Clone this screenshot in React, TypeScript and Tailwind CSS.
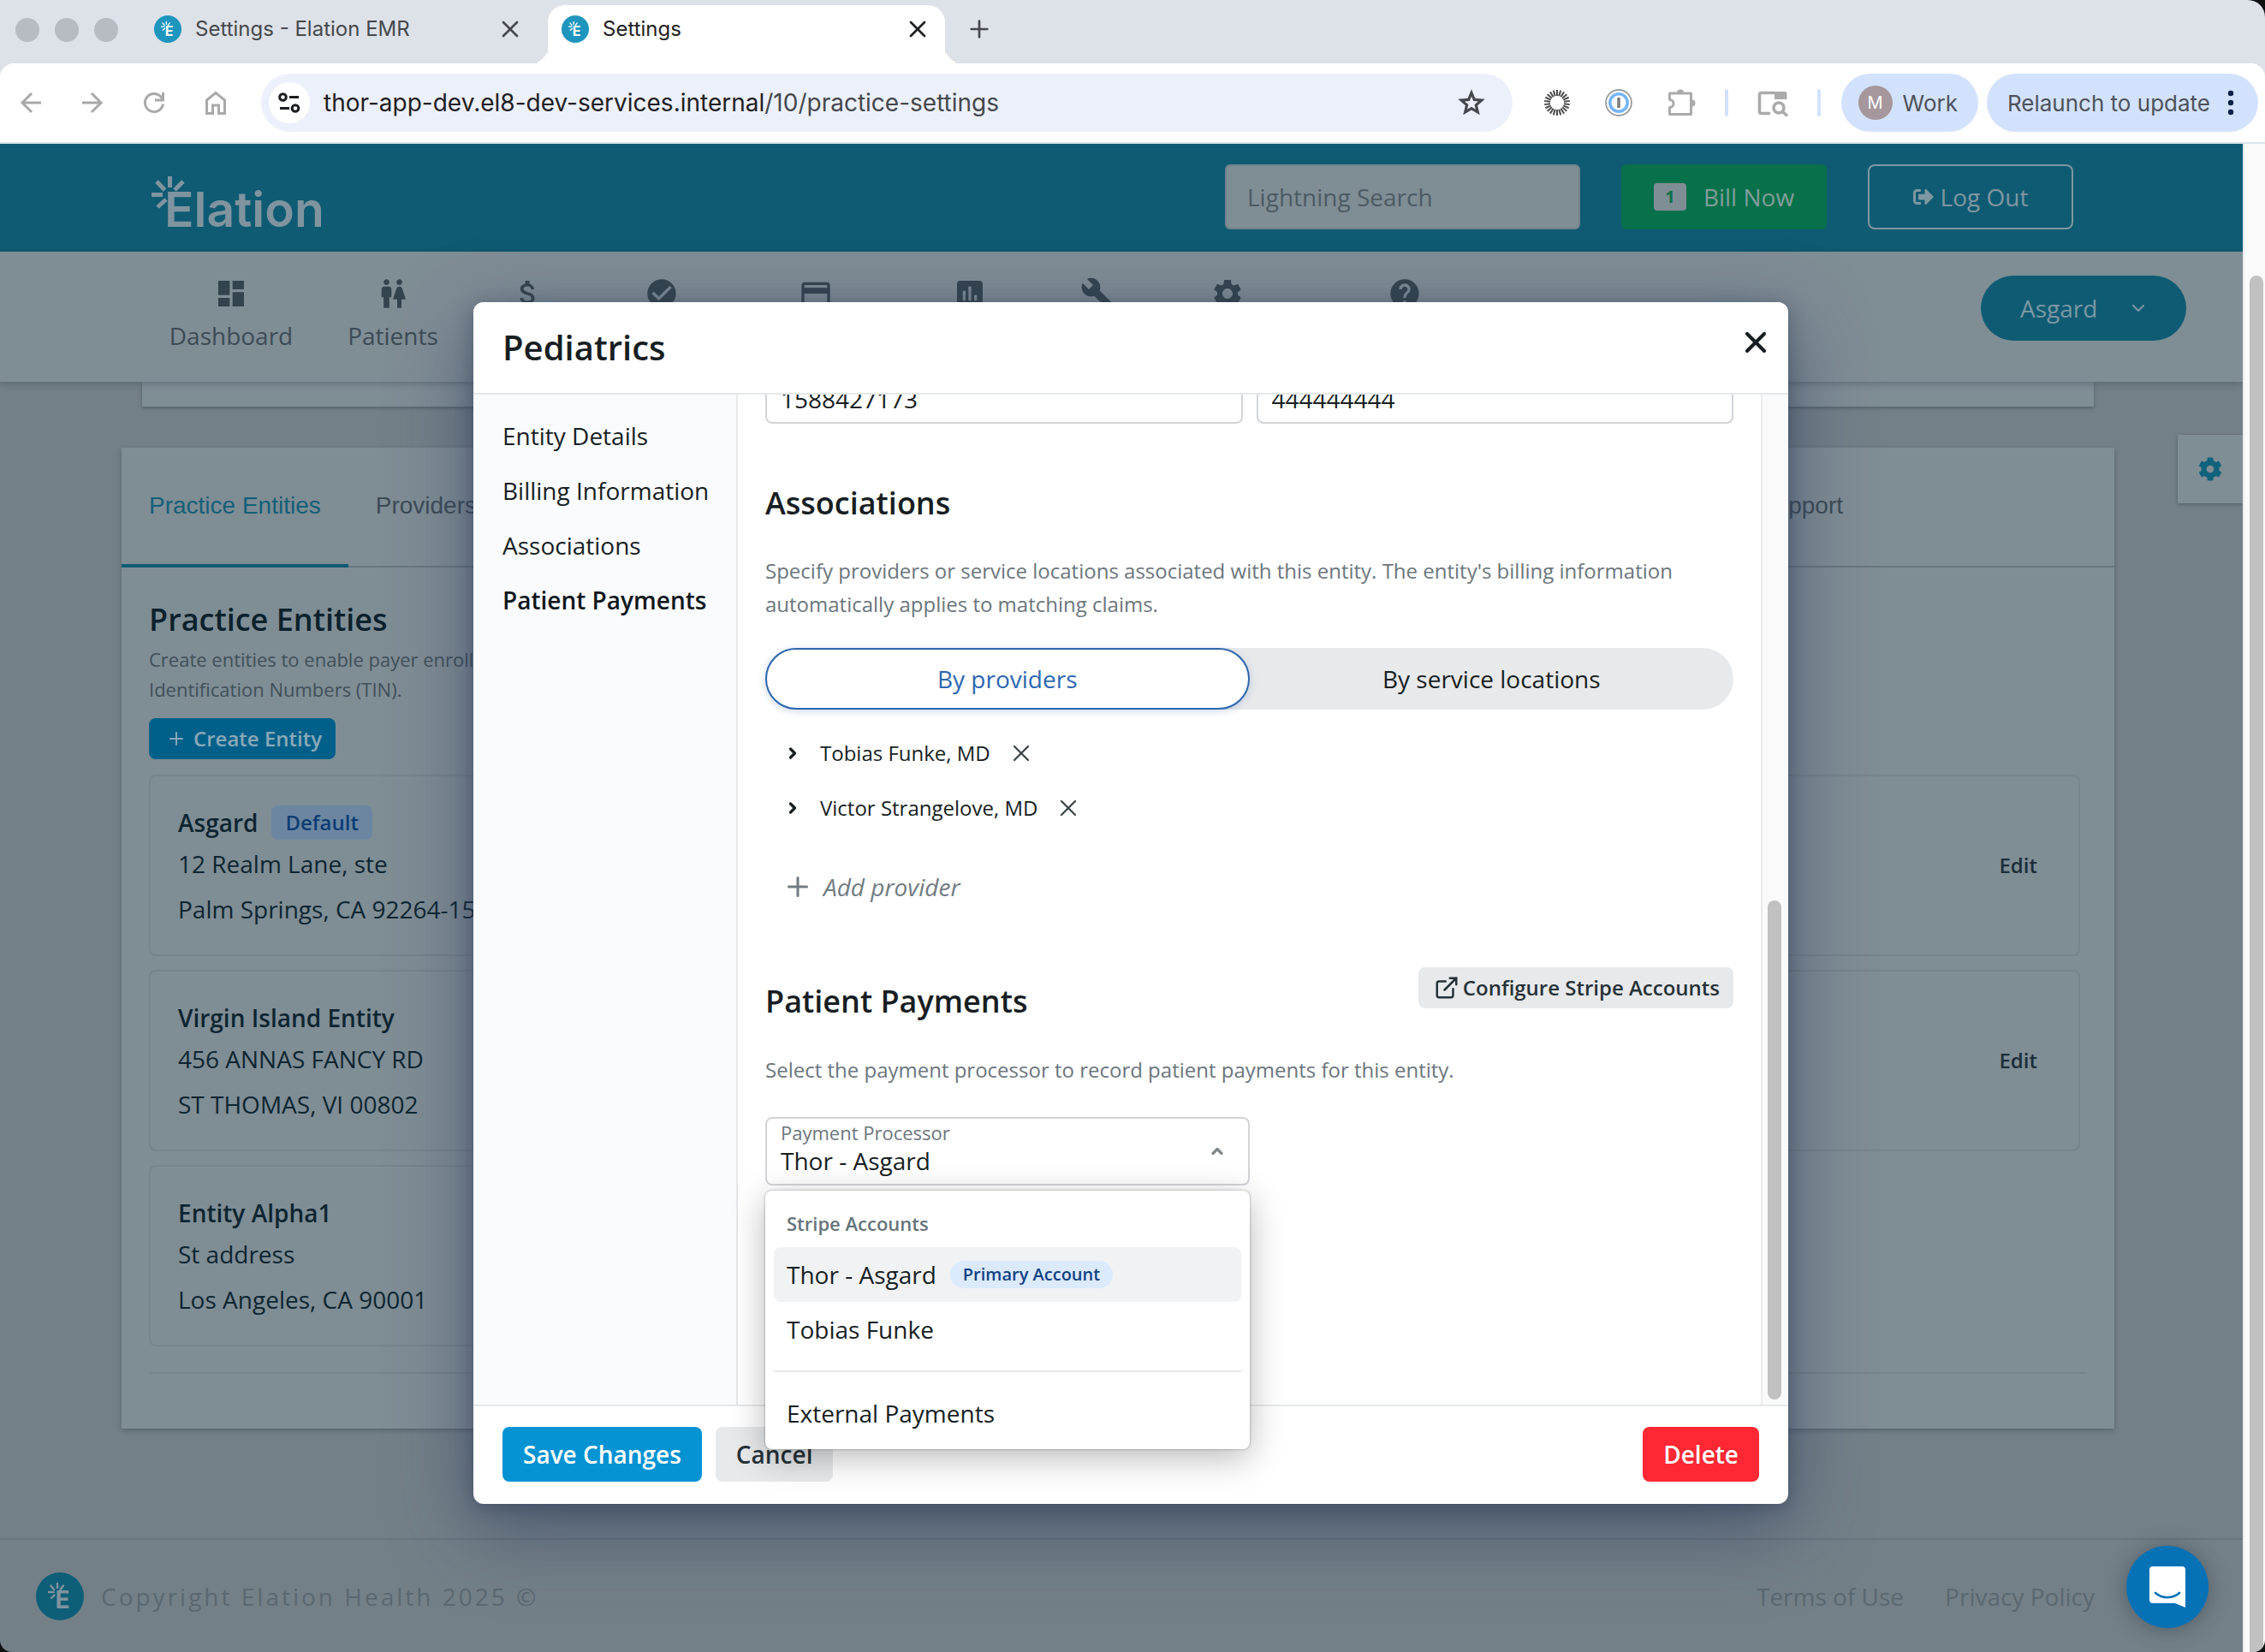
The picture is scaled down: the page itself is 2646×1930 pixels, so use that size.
import { ChevronDown, ChevronRight, ChevronUp, ExternalLink, Plus, X } from "lucide-react";
import { FaCog, FaSignOutAlt } from "react-icons/fa";
import {
  MdAssessment,
  MdAttachMoney,
  MdBuild,
  MdCheckCircle,
  MdCreditCard,
  MdDashboard,
  MdHelp,
  MdSettings,
  MdWc,
} from "react-icons/md";

const navItems = [
  { id: "dashboard", label: "Dashboard", icon: MdDashboard, width: "w-36" },
  { id: "patients", label: "Patients", icon: MdWc, width: "w-[110px]" },
  { id: "billing", icon: MdAttachMoney, width: "w-[82px]" },
  { id: "tasks", icon: MdCheckCircle, width: "w-[106px]" },
  { id: "payments", icon: MdCreditCard, width: "w-[130px]" },
  { id: "reports", icon: MdAssessment, width: "w-[106px]" },
  { id: "tools", icon: MdBuild, width: "w-[68px]" },
  { id: "settings", icon: MdSettings, width: "w-[112px]" },
  { id: "help", icon: MdHelp, width: "w-[178px]" },
];

const entities = [
  { name: "Asgard", street: "12 Realm Lane, ste", city: "Palm Springs, CA 92264-15", isDefault: true, canEdit: true },
  { name: "Virgin Island Entity", street: "456 ANNAS FANCY RD", city: "ST THOMAS, VI 00802", canEdit: true },
  { name: "Entity Alpha1", street: "St address", city: "Los Angeles, CA 90001" },
];

const sections = ["Entity Details", "Billing Information", "Associations", "Patient Payments"];

const providers = ["Tobias Funke, MD", "Victor Strangelove, MD"];

function ElationBadge({ size, fill, ink }: { size: number; fill: string; ink: string }) {
  return (
    <svg width={size} height={size} viewBox="0 0 56 56" className="shrink-0" aria-hidden>
      <circle cx="28" cy="28" r="28" fill={fill} />
      <g stroke={ink} strokeWidth="2.4" strokeLinecap="round">
        <path d="M25 13v5M17.5 15.5l3.5 4.5M32 15.500l-3.500 4.500M15 23h5.500M18 30l3.500-3.500" />
      </g>
      <text x="22.500" y="42" fontFamily="Inter, sans-serif" fontWeight="700" fontSize="28" fill={ink}>
        E
      </text>
    </svg>
  );
}

function ElationLogo() {
  return (
    <svg width="208" height="100" viewBox="0 0 208 100" role="img" aria-label="Elation">
      <g stroke="#7f949f" strokeWidth="5">
        <path d="M22.500 26v13M7 32l9.500 10M38 32L28 42M1 47.500h13M8 62l10-9" />
      </g>
      <text x="16" y="85" fontFamily="Inter, sans-serif" fontWeight="600" fontSize="57" fill="#7f949f">
        Elation
      </text>
    </svg>
  );
}

function SiteSettingsIcon() {
  return (
    <svg width="28" height="28" viewBox="0 0 28 28" fill="none" stroke="#1b1c1f" strokeWidth="3" aria-hidden>
      <circle cx="6.500" cy="7.500" r="3.800" />
      <path d="M14 7.500h11M3 20.500h11" />
      <circle cx="21" cy="20.500" r="3.800" />
    </svg>
  );
}

function StarIcon() {
  return (
    <svg width="36" height="36" viewBox="0 0 36 36" fill="none" stroke="#45484c" strokeWidth="3.200" aria-hidden>
      <path d="M18 6.500l3.300 7.900 8.500.700-6.500 5.600 2 8.300L18 24.600 10.700 29l2-8.300-6.500-5.600 8.500-.700z" />
    </svg>
  );
}

function BurstIcon() {
  const rays = Array.from({ length: 22 }, (_, i) => (i * 360) / 22);
  return (
    <svg width="32" height="32" viewBox="0 0 32 32" stroke="#4a4a4a" strokeWidth="2" aria-hidden>
      {rays.map((deg) => (
        <path key={deg} d="M16 1v7" transform={`rotate(${deg} 16 16)`} />
      ))}
    </svg>
  );
}

function PasswordIcon() {
  return (
    <svg width="32" height="32" viewBox="0 0 32 32" fill="none" aria-hidden>
      <circle cx="16" cy="16" r="15" stroke="#9b9f9f" strokeWidth="1.800" />
      <circle cx="16" cy="16" r="10.200" stroke="#78b4f7" strokeWidth="3.600" />
      <path d="M16 10v12" stroke="#7d7d7d" strokeWidth="3.600" />
    </svg>
  );
}

function PuzzleIcon() {
  return (
    <svg width="34" height="32" viewBox="0 0 34 32" aria-hidden>
      <path
        d="M3.500 5h25v24.500h-25v-8c6 0 6-9 0-9z"
        fill="none"
        stroke="#ababab"
        strokeWidth="3"
        strokeLinejoin="round"
      />
      <path d="M12 4.500a4 4 0 018 0zM29.500 12.500a4 4 0 010 8z" fill="#ababab" />
    </svg>
  );
}

function LensIcon() {
  return (
    <svg width="36" height="32" viewBox="0 0 36 32" fill="none" stroke="#ababab" strokeWidth="3.600" aria-hidden>
      <path d="M15 28.500H4.500a2 2 0 01-2-2v-20a2 2 0 012-2H20" />
      <path d="M20 3h12a2.500 2.500 0 012.500 2.500V12H20z" fill="#ababab" stroke="none" />
      <circle cx="25" cy="22" r="6" />
      <path d="M29.500 26.500l5.500 5" />
    </svg>
  );
}

function BrowserTab({ title, active }: { title: string; active?: boolean }) {
  return (
    <div
      className={
        active
          ? "relative ml-3 flex h-[68px] w-[464px] items-start rounded-t-[20px] bg-white px-4"
          : "ml-[26px] flex h-[68px] w-[464px] items-start px-4"
      }
    >
      {active ? (
        <>
          <span className="absolute bottom-0 -left-5 h-5 w-5 rounded-br-[20px] bg-[#dde1e8] shadow-[8px_8px_0_#ffffff]" />
          <span className="absolute -right-5 bottom-0 h-5 w-5 rounded-bl-[20px] bg-[#dde1e8] shadow-[-8px_8px_0_#ffffff]" />
        </>
      ) : null}
      <div className="relative flex h-14 flex-1 items-center gap-4">
        <ElationBadge size={32} fill="#1e95bd" ink="#ffffff" />
        <span className={active ? "flex-1 text-2xl text-[#1f2023]" : "flex-1 text-2xl text-[#45484c]"}>{title}</span>
        <button type="button" aria-label="Close tab">
          <X size={32} strokeWidth={2} className={active ? "text-[#1f2023]" : "text-[#45484c]"} />
        </button>
      </div>
    </div>
  );
}

function BrowserChrome() {
  return (
    <header className="bg-[#dde1e8] font-['Inter',sans-serif]">
      <div className="flex h-[74px] items-end pl-[18px]">
        <div className="flex h-[68px] gap-[18px] pt-[15px]">
          <span className="h-7 w-7 rounded-full bg-[#b7bcc3]" />
          <span className="h-7 w-7 rounded-full bg-[#b7bcc3]" />
          <span className="h-7 w-7 rounded-full bg-[#b7bcc3]" />
        </div>
        <BrowserTab title="Settings - Elation EMR" />
        <BrowserTab title="Settings" active />
        <button type="button" aria-label="New tab" className="ml-6 flex h-[68px] items-start pt-3">
          <Plus size={32} strokeWidth={2} className="text-[#45484c]" />
        </button>
      </div>

      <div className="flex h-[94px] items-center rounded-t-[16px] border-b-2 border-[#d9e6ea] bg-white pr-2 pl-5">
        <div className="flex gap-10 text-[#a9a9a9]">
          <button type="button" aria-label="Back">
            <svg width="32" height="32" viewBox="0 0 32 32" fill="none" stroke="currentColor" strokeWidth="3">
              <path d="M28 16H6M17 5L6 16l11 11" />
            </svg>
          </button>
          <button type="button" aria-label="Forward">
            <svg width="32" height="32" viewBox="0 0 32 32" fill="none" stroke="currentColor" strokeWidth="3">
              <path d="M4 16h22M15 5l11 11-11 11" />
            </svg>
          </button>
          <button type="button" aria-label="Reload">
            <svg width="32" height="32" viewBox="0 0 32 32" fill="none" stroke="currentColor" strokeWidth="3">
              <path d="M26.500 17.500A10.600 10.600 0 1123.500 8.500L26.500 12M26.500 4v9h-9.500" />
            </svg>
          </button>
          <button type="button" aria-label="Home">
            <svg width="32" height="32" viewBox="0 0 32 32" fill="none" stroke="currentColor" strokeWidth="3">
              <path d="M5.500 28.500V13L16 4.500 26.500 13v15.500h-7V19h-7v9.500z" />
            </svg>
          </button>
        </div>

        <div className="mr-9 ml-[37px] flex h-[68px] flex-1 items-center rounded-full bg-[#ecf0fa] pr-[30px] pl-[9px]">
          <button
            type="button"
            aria-label="View site information"
            className="flex h-12 w-12 items-center justify-center rounded-full bg-white"
          >
            <SiteSettingsIcon />
          </button>
          <p className="ml-4 flex-1 text-[28px] text-[#1f2023]">
            thor-app-dev.el8-dev-services.internal<span className="text-[#45484c]">/10/practice-settings</span>
          </p>
          <button type="button" aria-label="Bookmark this tab">
            <StarIcon />
          </button>
        </div>

        <div className="flex items-center gap-10">
          <BurstIcon />
          <PasswordIcon />
          <PuzzleIcon />
        </div>
        <div className="mr-9 ml-[34px] flex items-center gap-[34px]">
          <span className="h-8 w-1 rounded-full bg-[#d3e2fc]" />
          <LensIcon />
          <span className="h-8 w-1 rounded-full bg-[#d3e2fc]" />
        </div>
        <button
          type="button"
          className="-ml-3 flex h-[68px] items-center gap-3 rounded-full bg-[#d3e2fc] pr-6 pl-5 text-[26px] text-[#4d5259]"
        >
          <span className="flex h-10 w-10 items-center justify-center rounded-full bg-[#a5979b] text-xl text-white">M</span>
          Work
        </button>
        <button
          type="button"
          className="ml-2.5 flex h-[68px] items-center gap-5 rounded-full bg-[#d3e2fc] pr-7 pl-6 text-[26px] text-[#4d5259]"
        >
          Relaunch to update
          <svg width="8" height="32" viewBox="0 0 8 32" fill="#0b2147" aria-hidden>
            <circle cx="4" cy="5" r="3.200" />
            <circle cx="4" cy="16" r="3.200" />
            <circle cx="4" cy="27" r="3.200" />
          </svg>
        </button>
      </div>
    </header>
  );
}

function AppHeader() {
  return (
    <div className="flex h-[126px] items-center bg-[#0f5b73] pr-[198px] pb-0.5 pl-[176px]">
      <ElationLogo />
      <div className="ml-auto flex h-[76px] gap-12 text-[28px]">
        <input
          type="text"
          aria-label="Lightning Search"
          placeholder="Lightning Search"
          className="w-[415px] rounded-md border-2 border-[#71838c] bg-[#7f8d95] px-6 placeholder:text-[#4b5b64]"
        />
        <button
          type="button"
          className="flex w-60 items-center justify-center gap-5 rounded-md bg-[#08704a] text-[#7f9e9b]"
        >
          <span className="flex h-8 w-[38px] items-center justify-center rounded-[4px] bg-[#7f8d95] text-xl font-bold text-[#08704a]">
            1
          </span>
          Bill Now
        </button>
        <button
          type="button"
          className="flex w-60 items-center justify-center gap-2 rounded-lg border-2 border-[#7f97a3] text-[#7f97a3]"
        >
          <FaSignOutAlt size={24} />
          Log Out
        </button>
      </div>
    </div>
  );
}

function MainNav() {
  return (
    <nav className="relative flex h-[152px] items-start bg-[#7f8d95] pt-7 pr-[66px] pl-[198px] shadow-[0_2px_8px_rgba(40,55,65,0.35)]">
      <ul className="flex gap-[62px] pt-px text-[28px] leading-[38px] text-[#3b4b55]">
        {navItems.map(({ id, label, icon: Icon, width }) => (
          <li key={id} className={width}>
            <a href="#" aria-label={id} className="flex flex-col items-center gap-2.5">
              <Icon size={40} className="text-[#34444e]" />
              {label}
            </a>
          </li>
        ))}
      </ul>
      <button
        type="button"
        className="ml-auto flex h-[76px] w-60 items-center justify-between rounded-full bg-[#0f5b73] pr-11 pl-[46px] text-[28px] text-[#7b98a4]"
      >
        Asgard
        <ChevronDown size={24} strokeWidth={2} />
      </button>
    </nav>
  );
}

function EntityCard({ entity }: { entity: (typeof entities)[number] }) {
  return (
    <li
      className={
        entity.canEdit
          ? "flex items-center justify-between rounded-lg border-2 border-[#76848c] pt-[34px] pr-12 pb-[26px] pl-8"
          : "w-1/2 rounded-lg border-2 border-[#76848c] pt-[34px] pr-12 pb-[26px] pl-8"
      }
    >
      <div className="text-[28px] text-[#0d2531]">
        <div className="flex h-10 items-center gap-4">
          <h3 className="font-semibold">{entity.name}</h3>
          {entity.isDefault ? (
            <span className="flex h-10 items-center rounded-lg bg-[#6c86a1] px-4 text-2xl font-semibold text-[#0c3d74]">
              Default
            </span>
          ) : null}
        </div>
        <p className="mt-0.5 leading-[53px]">{entity.street}</p>
        <p className="leading-[53px]">{entity.city}</p>
      </div>
      {entity.canEdit ? (
        <button type="button" className="mb-2 text-2xl font-semibold text-[#1c2e39]">
          Edit
        </button>
      ) : null}
    </li>
  );
}

function PracticeEntities() {
  return (
    <section className="mt-12 mr-[150px] ml-[142px] bg-[#7f8d95] shadow-[0_2px_5px_rgba(40,55,65,0.4)]">
      <div className="flex h-[140px] border-b-2 border-[#68777f] font-['Liberation_Sans',sans-serif] text-[28px] text-[#3b4b55]">
        <button type="button" className="-mb-0.5 border-b-4 border-[#0f5b73] px-8 text-[#135f78]">
          Practice Entities
        </button>
        <button type="button" className="-mb-0.5 border-b-4 border-transparent px-8">
          Providers
        </button>
        <button type="button" className="-mb-0.5 mr-[285px] ml-auto border-b-4 border-transparent px-8">
          Support
        </button>
      </div>
      <div className="px-8 pt-[39px] pb-16">
        <h2 className="text-4xl leading-[44px] font-semibold text-[#0b212c]">Practice Entities</h2>
        <p className="mt-[7px] text-[22px] leading-[35px] text-[#3f505a]">
          Create entities to enable payer enroll
          <br />
          Identification Numbers (TIN).
        </p>
        <button
          type="button"
          className="mt-4 flex h-12 items-center gap-2 rounded-lg bg-[#00608a] pr-4 pl-5 text-2xl font-semibold text-[#8ba8b8]"
        >
          <Plus size={24} strokeWidth={2} />
          Create Entity
        </button>
        <ul className="mt-[18px] mr-2 flex flex-col gap-4">
          {entities.map((entity) => (
            <EntityCard key={entity.name} entity={entity} />
          ))}
        </ul>
        <hr className="mt-[30px] border-t-2 border-[#76848c]" />
      </div>
    </section>
  );
}

function PageFooter() {
  return (
    <footer className="mt-32 flex flex-1 items-center border-t-2 border-[#68757e] pr-[173px] pl-[42px] text-[28px] text-[#5a6871]">
      <ElationBadge size={56} fill="#0f5e77" ink="#7f949f" />
      <p className="ml-5 tracking-[3px]">Copyright Elation Health 2025 ©</p>
      <div className="ml-auto flex gap-12">
        <a href="#">Terms of Use</a>
        <a href="#">Privacy Policy</a>
      </div>
    </footer>
  );
}

function ProcessorSelect() {
  return (
    <div className="relative mt-9 w-1/2">
      <label htmlFor="processor" className="absolute top-0.5 left-[18px] text-[22px] leading-8 text-[#6b767d]">
        Payment Processor
      </label>
      <select
        id="processor"
        defaultValue="thor"
        className="h-20 w-full appearance-none rounded-lg border-2 border-[#d2d4d8] bg-transparent pt-[22px] pl-4 text-[28px] text-[#171e22]"
      >
        <option value="thor">Thor - Asgard</option>
        <option value="tobias">Tobias Funke</option>
        <option value="external">External Payments</option>
      </select>
      <ChevronUp size={20} strokeWidth={4} className="pointer-events-none absolute top-[30px] right-7 text-[#80878b]" />

      <div className="absolute top-full left-0 z-20 mt-1.5 w-full rounded-lg bg-white p-2.5 text-[28px] text-[#171e22] shadow-[0_0_3px_rgba(0,0,0,0.35),0_10px_40px_rgba(0,0,0,0.28)]">
        <p className="flex h-14 items-center px-[15px] text-[22px] font-semibold text-[#66747a]">Stripe Accounts</p>
        <button type="button" className="flex h-16 w-full items-center gap-4 rounded-lg bg-[#f1f2f4] px-[15px]">
          Thor - Asgard
          <span className="flex h-8 items-center rounded-full bg-[#dbeafd] px-[15px] text-xl font-semibold text-[#0f4184]">
            Primary Account
          </span>
        </button>
        <button type="button" className="flex h-16 w-full items-center px-[15px]">
          Tobias Funke
        </button>
        <hr className="my-4 border-t-2 border-[#e8e9eb]" />
        <button type="button" className="flex h-16 w-full items-center px-[15px]">
          External Payments
        </button>
      </div>
    </div>
  );
}

function EntityModal() {
  return (
    <div
      role="dialog"
      aria-labelledby="entity-title"
      className="flex w-[1536px] max-w-full flex-col rounded-xl bg-white text-[#171e22] shadow-[0_4px_20px_rgba(45,55,85,0.45),0_28px_90px_rgba(45,58,90,0.6)]"
    >
      <div className="relative z-10 flex h-[108px] items-center justify-between rounded-t-xl border-b-2 border-[#e6e8ea] bg-white pr-[18px] pl-[34px]">
        <h1 id="entity-title" className="text-[40px] font-semibold">
          Pediatrics
        </h1>
        <button type="button" aria-label="Close" className="mb-3">
          <X size={40} strokeWidth={2.5} />
        </button>
      </div>

      <div className="flex min-h-0 flex-1">
        <nav className="w-[309px] shrink-0 border-r-2 border-[#e6e8ea] bg-[#fafbfd] pt-4 pl-[34px] text-[28px] leading-[64px] whitespace-nowrap">
          {sections.map((section) => (
            <a
              key={section}
              href="#"
              className={section === "Patient Payments" ? "block font-semibold text-[#0f171b]" : "block"}
            >
              {section}
            </a>
          ))}
        </nav>

        {/* scrolled form, its first row sits partly under the header */}
        <div className="min-w-0 flex-1 px-8">
          <div className="-mt-[46px] grid grid-cols-2 gap-4">
            <input
              aria-label="NPI"
              defaultValue="1588427173"
              className="h-20 min-w-0 rounded-lg border-2 border-[#d2d4d8] pt-[22px] pl-4 text-[28px]"
            />
            <input
              aria-label="Tax ID"
              defaultValue="444444444"
              className="h-20 min-w-0 rounded-lg border-2 border-[#d2d4d8] pt-[22px] pl-4 text-[28px]"
            />
          </div>

          <h2 className="mt-[69px] text-4xl leading-[48px] font-semibold">Associations</h2>
          <p className="mt-[35px] text-2xl leading-[39px] text-[#6b767d]">
            Specify providers or service locations associated with this entity. The entity's billing information
            automatically applies to matching claims.
          </p>

          <div className="mt-8 grid h-[72px] grid-cols-2 rounded-full bg-[#e8e9eb] text-[28px]">
            <button
              type="button"
              className="rounded-full border-2 border-[#2f66ae] bg-white text-[#2c67b0] shadow-[0_2px_8px_rgba(47,102,174,0.25)]"
            >
              By providers
            </button>
            <button type="button">By service locations</button>
          </div>

          <ul className="mt-[19px] text-2xl leading-[64px]">
            {providers.map((provider) => (
              <li key={provider} className="flex items-center pl-[22px]">
                <ChevronRight size={20} strokeWidth={4} />
                <span className="ml-[22px]">{provider}</span>
                <button type="button" aria-label={`Remove ${provider}`} className="ml-5">
                  <X size={32} strokeWidth={1.75} className="text-[#3c474c]" />
                </button>
              </li>
            ))}
          </ul>

          <button type="button" className="mt-10 flex h-10 items-center gap-3 pl-5 text-[28px] text-[#717c82] italic">
            <Plus size={36} strokeWidth={2} />
            Add provider
          </button>

          <div className="mt-[74px] flex h-16 items-start justify-between">
            <h2 className="mt-4 text-4xl leading-[48px] font-semibold">Patient Payments</h2>
            <button
              type="button"
              className="flex h-12 items-center gap-1 rounded-lg bg-[#e8e9eb] pr-4 pl-[18px] text-2xl font-semibold text-[#263238]"
            >
              <ExternalLink size={30} strokeWidth={2} />
              Configure Stripe Accounts
            </button>
          </div>
          <p className="mt-9 text-2xl leading-[39px] text-[#6b767d]">
            Select the payment processor to record patient payments for this entity.
          </p>
          <ProcessorSelect />
        </div>

        <div className="flex w-8 items-end border-l-2 border-[#ececee] bg-[#fafafa] pb-1.5 pl-1.5">
          <div className="h-[583px] w-4 rounded-full bg-[#c1c1c1]" />
        </div>
      </div>

      <div className="flex items-center gap-4 border-t-2 border-[#e6e8ea] px-[34px] pt-6 pb-[26px] text-[28px] font-semibold">
        <button type="button" className="h-16 rounded-lg bg-[#0593d3] px-6 text-white">
          Save Changes
        </button>
        <button type="button" className="h-16 rounded-lg bg-[#e8e9eb] px-6 text-[#263238]">
          Cancel
        </button>
        <button type="button" className="ml-auto h-16 rounded-lg bg-[#fd2833] px-6 text-white">
          Delete
        </button>
      </div>
    </div>
  );
}

export default function App() {
  return (
    <div className="min-h-screen bg-[#0d1112]">
      <div className="flex min-h-screen flex-col overflow-hidden rounded-tr-[20px] rounded-b-[14px]">
        <BrowserChrome />
        <div className="flex flex-1 font-['Open_Sans',sans-serif]">
          <main className="relative flex flex-1 flex-col overflow-hidden bg-[#738088]">
            <AppHeader />
            <MainNav />
            <div className="mr-[174px] ml-[166px] h-[29px] bg-[#7f8d95] shadow-[0_2px_4px_rgba(40,55,65,0.4)]" />
            <PracticeEntities />
            <PageFooter />

            <button
              type="button"
              aria-label="Page settings"
              className="absolute top-[340px] right-0 flex h-20 w-[76px] items-center justify-center bg-[#7f8d95] text-[#10627c] shadow-[0_1px_4px_rgba(40,55,65,0.5)]"
            >
              <FaCog size={28} />
            </button>

            <div className="absolute inset-0 flex justify-center pt-[185px] pb-[173px] pl-[22px]">
              <EntityModal />
            </div>

            <button
              type="button"
              aria-label="Open chat"
              className="absolute right-10 bottom-7 flex h-24 w-24 items-center justify-center rounded-full bg-[#0672b6] shadow-[0_2px_24px_rgba(40,50,60,0.45)]"
            >
              <svg width="44" height="50" viewBox="0 0 44 50" aria-hidden>
                <path d="M5 1h34a4 4 0 014 4v44l-12-5H5a4 4 0 01-4-4V5a4 4 0 014-4z" fill="#ffffff" />
                <path d="M8 32c8 7 20 7 28 0" fill="none" stroke="#0672b6" strokeWidth="2.600" strokeLinecap="round" />
              </svg>
            </button>
          </main>
          <div className="flex w-[26px] items-end border-l-2 border-[#ececf1] bg-[#fafafa] pt-[154px] pl-1.5">
            <div className="h-full w-4 rounded-t-full bg-[#c1c1c1]" />
          </div>
        </div>
      </div>
    </div>
  );
}
